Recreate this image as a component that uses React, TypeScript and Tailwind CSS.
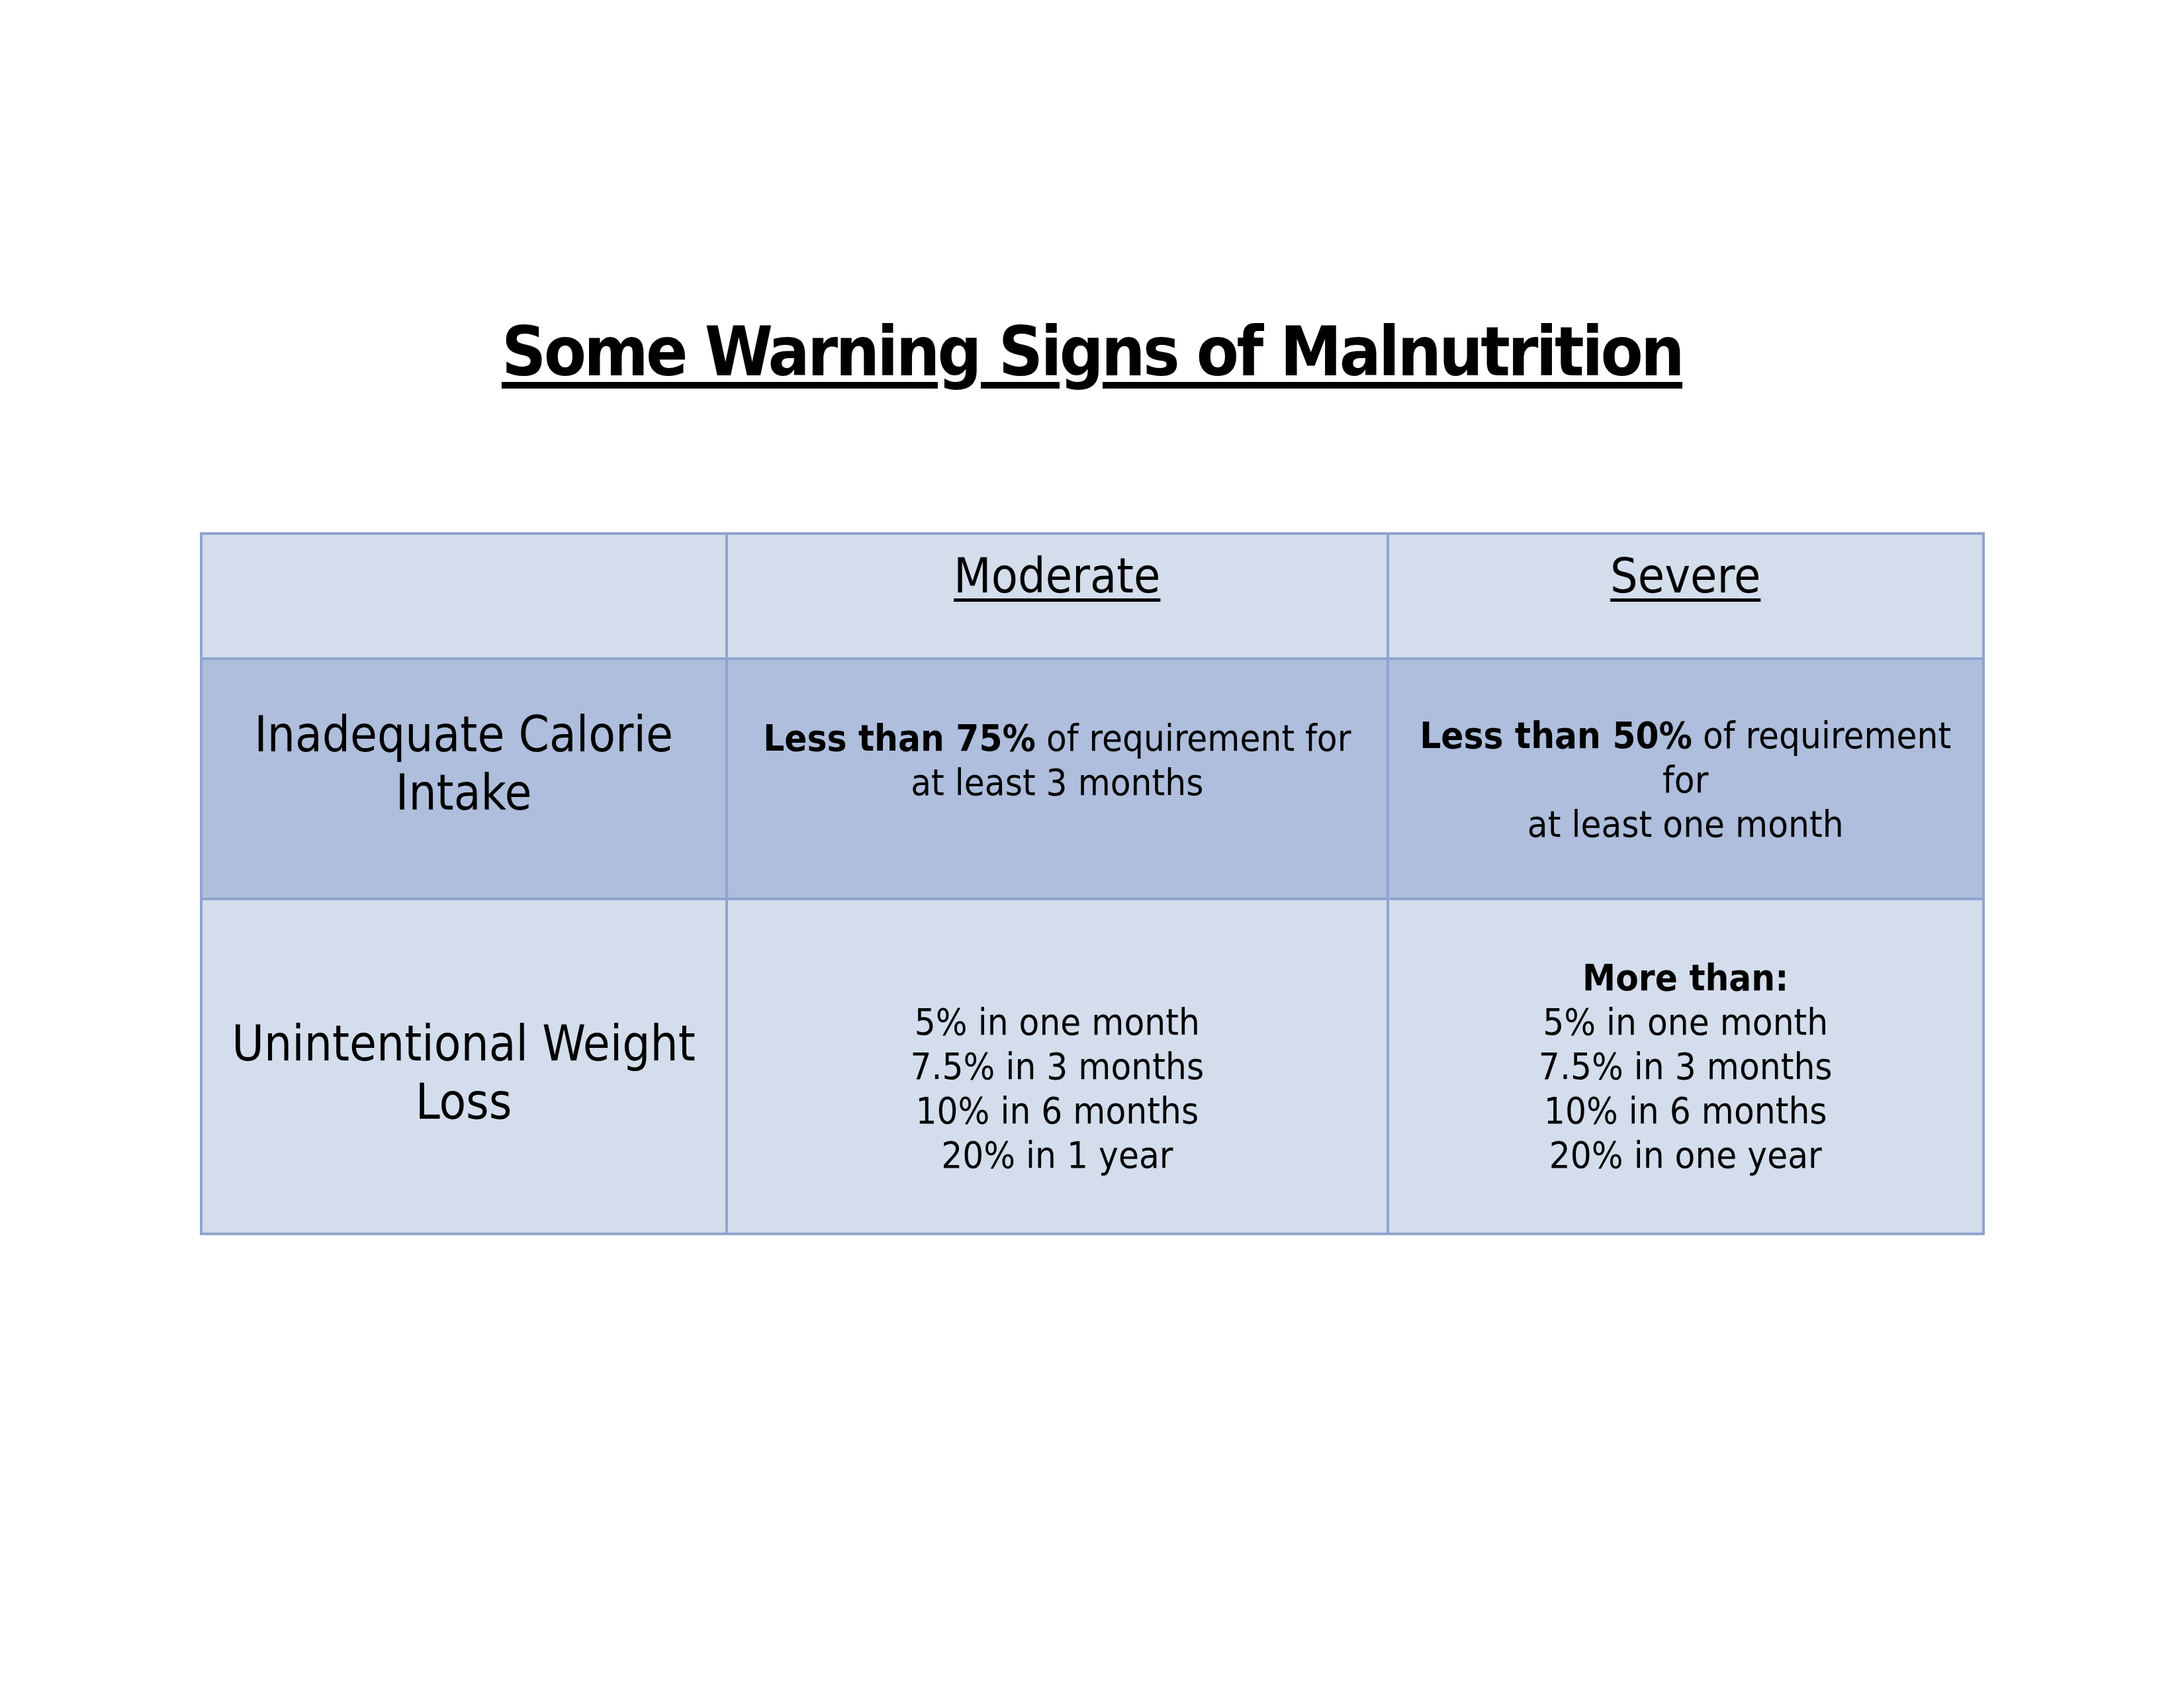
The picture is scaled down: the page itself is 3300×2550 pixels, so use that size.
const font = "font-['DejaVu_Sans_Condensed','DejaVu_Sans',sans-serif]";

const App = () => {
  return (
    <div className={`w-[3300px] h-[2550px] bg-white text-black ${font} flex flex-col items-center`}>
      <h1 className="mt-[479px] text-[104px] leading-none font-bold tracking-[-3.7px] underline decoration-[length:10px] underline-offset-[10px]">
        Some Warning Signs of Malnutrition
      </h1>

      <table className="mt-[221px] border-collapse border-4 border-[#8EA5CF] w-[2697px] text-center">
        <tbody>
          <tr className="bg-[#D3DDEC] h-[189px] align-top">
            <td className="w-[795px] border-4 border-[#8EA5CF]"></td>
            <td className="w-[1001px] border-4 border-[#8EA5CF] pt-[18px] text-[73px] leading-[1.2]">
              <span className="underline decoration-[length:5px] underline-offset-[9px]">Moderate</span>
            </td>
            <td className="w-[901px] border-4 border-[#8EA5CF] pt-[18px] text-[73px] leading-[1.2]">
              <span className="underline decoration-[length:5px] underline-offset-[9px]">Severe</span>
            </td>
          </tr>

          <tr className="bg-[#AEBEDC] h-[363px] align-top">
            <td className="border-4 border-[#8EA5CF] pt-[68px] text-[74px] leading-[88px]">
              Inadequate Calorie
              <br />
              Intake
            </td>
            <td className="border-4 border-[#8EA5CF] pt-[84px] text-[56px] leading-[67px]">
              <b>Less than 75%</b> of requirement for
              <br />
              at least 3 months
            </td>
            <td className="border-4 border-[#8EA5CF] pt-[80px] text-[56px] leading-[67px]">
              <b>Less than 50%</b> of requirement
              <br />
              for
              <br />
              at least one month
            </td>
          </tr>

          <tr className="bg-[#D3DDEC] h-[506px] align-top">
            <td className="border-4 border-[#8EA5CF] pt-[172px] text-[74px] leading-[88px]">
              Unintentional Weight
              <br />
              Loss
            </td>
            <td className="border-4 border-[#8EA5CF] pt-[150px] text-[56px] leading-[67px]">
              5% in one month
              <br />
              7.5% in 3 months
              <br />
              10% in 6 months
              <br />
              20% in 1 year
            </td>
            <td className="border-4 border-[#8EA5CF] pt-[83px] text-[56px] leading-[67px]">
              <b>More than:</b>
              <br />
              5% in one month
              <br />
              7.5% in 3 months
              <br />
              10% in 6 months
              <br />
              20% in one year
            </td>
          </tr>
        </tbody>
      </table>
    </div>
  );
};

export default App;
